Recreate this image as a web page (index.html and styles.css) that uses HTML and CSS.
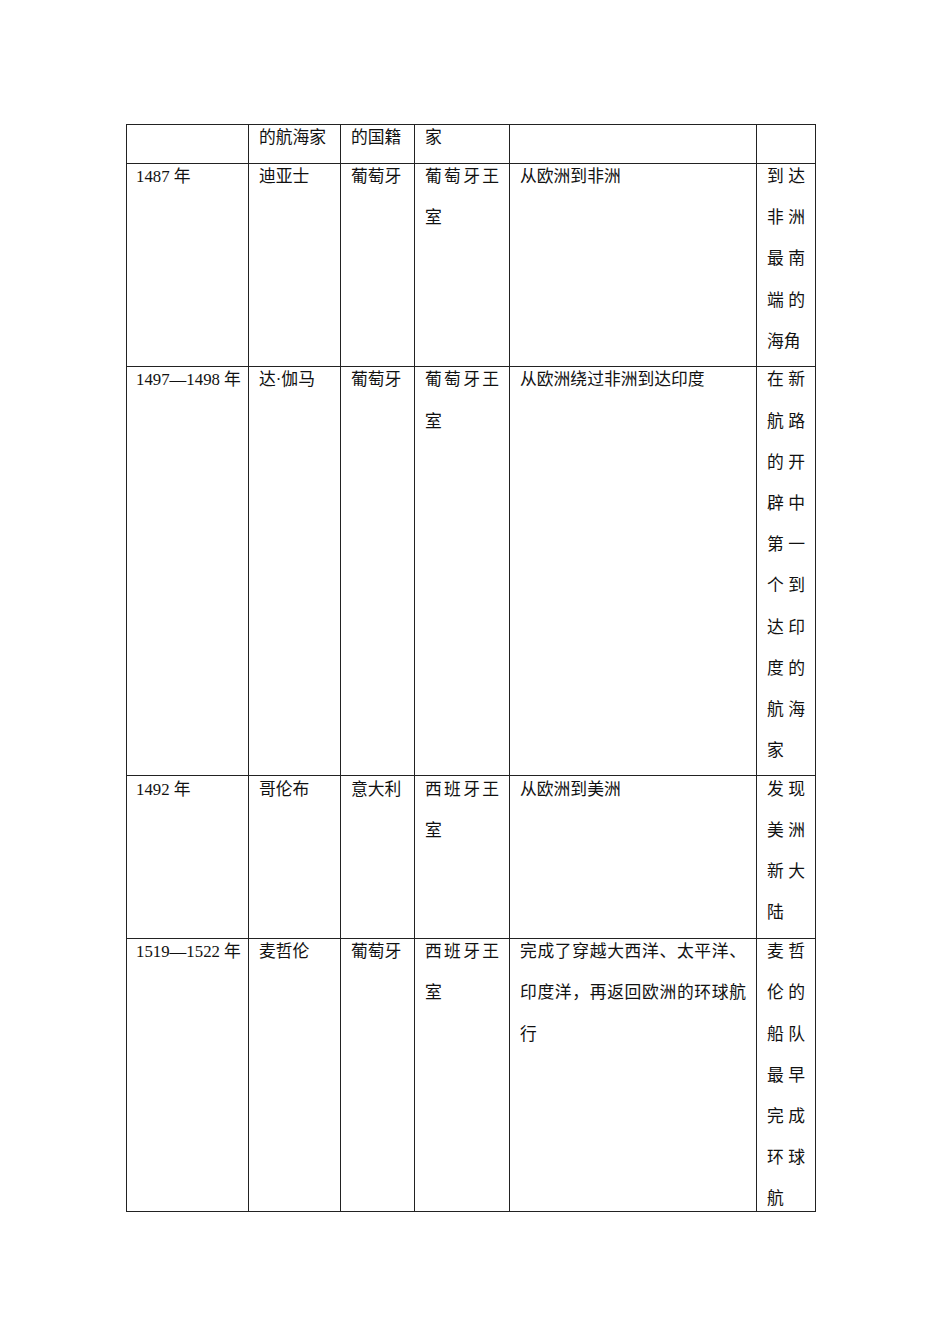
FILE: index.html
```html
<!DOCTYPE html>
<html lang="zh-CN">
<head>
<meta charset="utf-8">
<title>新航路开辟</title>
<link rel="stylesheet" href="styles.css">
</head>
<body>
<div class="page">
<table class="voyages">
  <colgroup>
    <col class="c1"><col class="c2"><col class="c3"><col class="c4"><col class="c5"><col class="c6">
  </colgroup>
  <tr>
    <td class="year"><div class="t"></div></td>
    <td><div class="t">的航海家</div></td>
    <td><div class="t">的国籍</div></td>
    <td><div class="t">家</div></td>
    <td><div class="t"></div></td>
    <td><div class="t"></div></td>
  </tr>
  <tr>
    <td class="year"><div class="t">1487 年</div></td>
    <td><div class="t">迪亚士</div></td>
    <td><div class="t">葡萄牙</div></td>
    <td><div class="t">葡萄牙王室</div></td>
    <td><div class="t">从欧洲到非洲</div></td>
    <td><div class="t">到达非洲最南端的海角</div></td>
  </tr>
  <tr>
    <td class="year"><div class="t">1497—1498 年</div></td>
    <td><div class="t">达·伽马</div></td>
    <td><div class="t">葡萄牙</div></td>
    <td><div class="t">葡萄牙王室</div></td>
    <td><div class="t">从欧洲绕过非洲到达印度</div></td>
    <td><div class="t">在新航路的开辟中第一个到达印度的航海家</div></td>
  </tr>
  <tr>
    <td class="year"><div class="t">1492 年</div></td>
    <td><div class="t">哥伦布</div></td>
    <td><div class="t">意大利</div></td>
    <td><div class="t">西班牙王室</div></td>
    <td><div class="t">从欧洲到美洲</div></td>
    <td><div class="t">发现美洲新大陆</div></td>
  </tr>
  <tr class="cut">
    <td class="year"><div class="t">1519—1522 年</div></td>
    <td><div class="t">麦哲伦</div></td>
    <td><div class="t">葡萄牙</div></td>
    <td><div class="t">西班牙王室</div></td>
    <td><div class="t">完成了穿越大西洋、太平洋、印度洋，再返回欧洲的环球航行</div></td>
    <td><div class="t">麦哲伦的船队最早完成环球航</div></td>
  </tr>
</table>
</div>
</body>
</html>
```

FILE: styles.css
```css
html, body {
  margin: 0;
  padding: 0;
  background: #ffffff;
}

.page {
  width: 950px;
  height: 1344px;
  padding: 124px 0 0 126px;
  box-sizing: border-box;
  overflow: hidden;
}

.voyages {
  border-collapse: collapse;
  table-layout: fixed;
  width: 689px;
  font-family: "Liberation Serif", "Noto Sans CJK SC", serif;
  font-size: 16.8px;
  color: #111;
}

.c1 { width: 122px; }
.c2 { width: 92px; }
.c3 { width: 74px; }
.c4 { width: 95px; }
.c5 { width: 247px; }
.c6 { width: 59px; }

.voyages td {
  border: 1px solid #222;
  vertical-align: top;
  padding: 0 10px 4px 10px;
}

.voyages td.year {
  padding-left: 9px;
  padding-right: 0;
  white-space: nowrap;
}

.t {
  line-height: 41.2px;
  margin-top: -7.6px;
  text-align: justify;
  min-height: 41.2px;
}

.cut td {
  padding-bottom: 0;
}

.cut td:last-child .t {
  margin-bottom: -8.8px;
}
```
